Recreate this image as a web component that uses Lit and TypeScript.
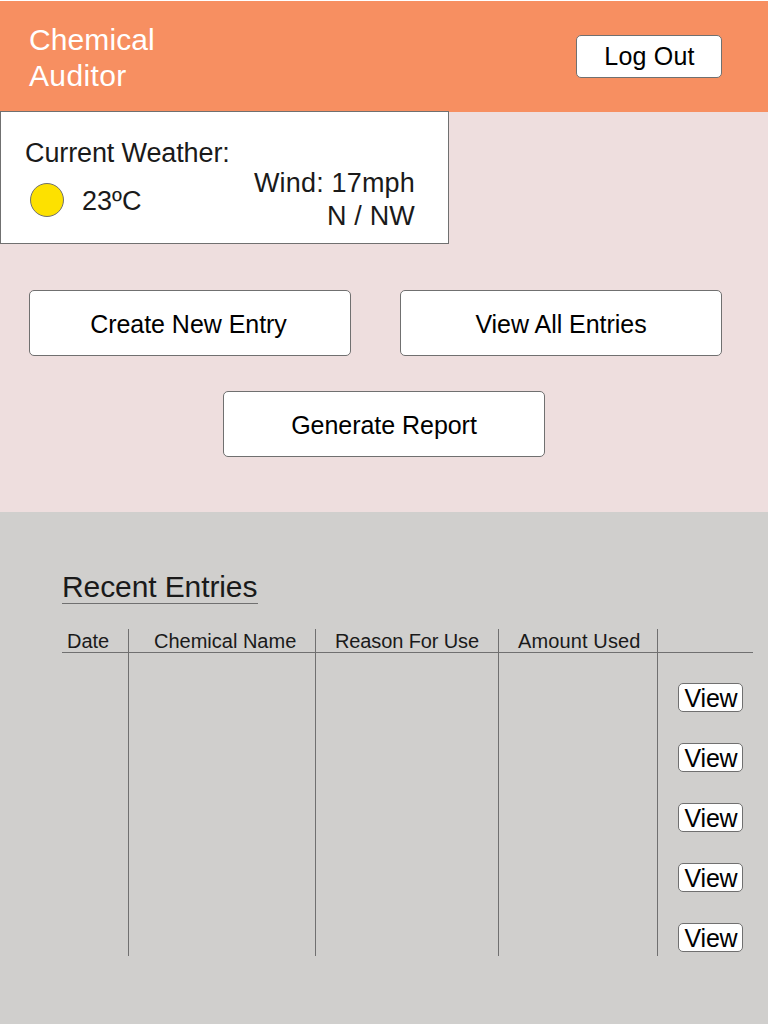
import { LitElement, html, css } from "lit";
import { customElement, property } from "lit/decorators.js";

@customElement("app-button")
class AppButton extends LitElement {
  @property() label = "";

  static styles = css`
    :host {
      display: block;
      box-sizing: border-box;
    }
    .button {
      display: flex;
      align-items: center;
      justify-content: center;
      box-sizing: border-box;
      width: 100%;
      height: 100%;
      margin: 0;
      padding: var(--button-padding, 0);
      border: 1px solid #707070;
      border-radius: 5px;
      background: #fff;
      color: #000;
      font: 25px/28px "Liberation Sans", Arial, sans-serif;
      letter-spacing: var(--button-spacing, 0);
      white-space: nowrap;
    }
  `;

  render() {
    return html`<button class="button" type="button">${this.label}</button>`;
  }
}

@customElement("app-root")
class AppRoot extends LitElement {
  private columns = ["Date", "Chemical Name", "Reason For Use", "Amount Used"];
  private rows = [1, 2, 3, 4, 5];

  static styles = css`
    :host {
      display: flex;
      flex-direction: column;
      box-sizing: border-box;
      width: 768px;
      height: 1024px;
      padding-top: 1px;
      overflow: hidden;
      background: #fff;
      color: #1a1a1a;
      font-family: "Liberation Sans", Arial, sans-serif;
    }
    h1, h2, p {
      margin: 0;
      font-weight: 400;
    }
    .header {
      display: flex;
      justify-content: space-between;
      align-items: flex-start;
      box-sizing: border-box;
      height: 111px;
      padding: 21px 46px 0 29px;
      background: #f78f61;
    }
    .title {
      width: 140px;
      color: #fff;
      font-size: 30px;
      line-height: 36px;
      letter-spacing: 0.1px;
    }
    .title-end {
      letter-spacing: 0.35px;
    }
    .logout {
      width: 146px;
      height: 43px;
      margin-top: 13px;
      --button-padding: 0 0 1px 1px;
      --button-spacing: 0.2px;
    }
    .main {
      display: flow-root;
      height: 400px;
      background: #eedede;
    }
    .weather {
      position: relative;
      display: flex;
      justify-content: space-between;
      box-sizing: border-box;
      width: 449px;
      height: 133px;
      margin-top: -1px;
      padding: 25px 33px 0 24px;
      border: 1px solid #707070;
      background: #fff;
      font-size: 27px;
      line-height: 33px;
      white-space: nowrap;
    }
    .label {
      letter-spacing: -0.12px;
    }
    .now {
      display: flex;
      align-items: center;
      gap: 18px;
      margin-top: 13px;
      padding-left: 5px;
    }
    .degrees {
      height: 32px;
      padding-top: 2px;
    }
    .sun {
      display: block;
      width: 34px;
      height: 34px;
    }
    .wind {
      padding-top: 30px;
      text-align: right;
      letter-spacing: 0.18px;
    }
    .actions {
      display: grid;
      grid-template-columns: 322px 322px;
      column-gap: 49px;
      row-gap: 35px;
      padding: 46px 0 0 29px;
    }
    .action {
      height: 66px;
      --button-padding: 2px 3px 0 0;
      --button-spacing: -0.04px;
    }
    .all {
      --button-padding: 2px 0 0 0;
    }
    .report {
      grid-column: 1 / -1;
      width: 322px;
      margin-left: 194px;
      --button-padding: 2px 0 0 0;
    }
    .recent {
      flex: 1;
      padding: 57px 15px 0 62px;
      background: #d0cfcd;
    }
    .heading {
      width: 196px;
      height: 34px;
      border-bottom: 1px solid #707070;
      font-size: 30px;
      line-height: 36px;
      letter-spacing: -0.1px;
      white-space: nowrap;
    }
    .table {
      display: grid;
      grid-template-columns: 67px 187px 183px 159px 95px;
      grid-template-rows: 24px 303px;
      width: 691px;
      margin-top: 25px;
    }
    .head, .cell {
      box-sizing: border-box;
      border-right: 1px solid #707070;
    }
    .head {
      border-bottom: 1px solid #707070;
      padding-left: 19px;
      font-size: 20px;
      line-height: 24px;
      white-space: nowrap;
    }
    .head:nth-child(1) {
      padding-left: 5px;
    }
    .head:nth-child(2) {
      padding-left: 25px;
    }
    .head:nth-child(3) {
      letter-spacing: -0.12px;
    }
    .head:nth-child(4) {
      letter-spacing: 0.12px;
    }
    .head:nth-child(5), .views {
      border-right: 0;
    }
    .views {
      display: flex;
      flex-direction: column;
      gap: 31px;
      padding: 30px 0 0 20px;
    }
    .view {
      width: 65px;
      height: 29px;
      --button-padding: 1px 0 0 1px;
      --button-spacing: -0.2px;
    }
  `;

  render() {
    return html`
      <header class="header">
        <h1 class="title">Chemical <span class="title-end">Auditor</span></h1>
        <app-button class="logout" label="Log Out"></app-button>
      </header>
      <main class="main">
        <section class="weather">
          <div>
            <p class="label">Current Weather:</p>
            <div class="now">
              <svg class="sun" viewBox="0 0 34 34">
                <circle cx="17" cy="17" r="16.5" fill="#fde100" stroke="#707070" />
              </svg>
              <span class="degrees">23ºC</span>
            </div>
          </div>
          <div class="wind">
            <p>Wind: 17mph</p>
            <p>N / NW</p>
          </div>
        </section>
        <nav class="actions">
          <app-button class="action" label="Create New Entry"></app-button>
          <app-button class="action all" label="View All Entries"></app-button>
          <app-button class="action report" label="Generate Report"></app-button>
        </nav>
      </main>
      <section class="recent">
        <h2 class="heading">Recent Entries</h2>
        <div class="table">
          ${this.columns.map((name) => html`<div class="head">${name}</div>`)}
          <div class="head"></div>
          ${this.columns.map(() => html`<div class="cell"></div>`)}
          <div class="views">
            ${this.rows.map(() => html`<app-button class="view" label="View"></app-button>`)}
          </div>
        </div>
      </section>
    `;
  }
}
